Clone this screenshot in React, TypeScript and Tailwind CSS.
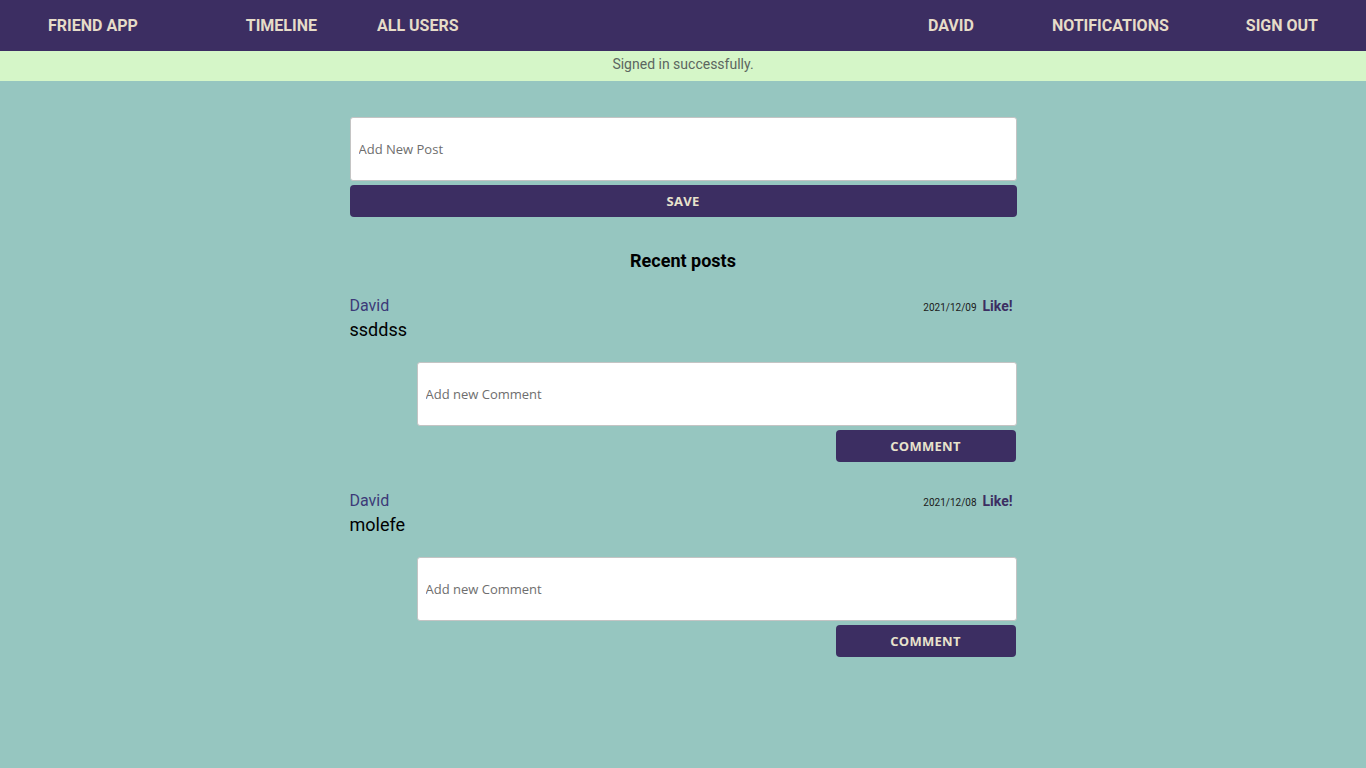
import React from "react";

const posts = [
  { author: "David", body: "ssddss", date: "2021/12/09" },
  { author: "David", body: "molefe", date: "2021/12/08" },
];

export default function App() {
  return (
    <div className="min-h-screen bg-[#96c6c0]" style={{ fontFamily: "Roboto, 'Noto Sans', sans-serif" }}>
      <nav className="h-[51px] bg-[#3c2e62] flex items-center pt-[1px] text-[#e6dcc8] font-bold text-[16px] pl-[48px] pr-[48px]">
        <a className="">FRIEND APP</a>
        <a className="ml-[108px]">TIMELINE</a>
        <a className="ml-[60px]">ALL USERS</a>
        <a className="ml-auto">DAVID</a>
        <a className="ml-[78px]">NOTIFICATIONS</a>
        <a className="ml-[77px]">SIGN OUT</a>
      </nav>
      <div className="h-[30px] bg-[#d5f6c8] flex items-center justify-center pb-[4px] text-[14px] text-[#5c6660]">
        Signed in successfully.
      </div>
      <main className="w-[667px] mx-auto pt-[36px] pb-10">
        <input
          placeholder="Add New Post"
          className="block w-full h-[64px] bg-white border border-[#c4c4c4] rounded-[3px] px-[8px] text-[13px] text-[#333] placeholder:text-[#6e6e6e] outline-none"
          style={{ fontFamily: "'Open Sans', 'Noto Sans', sans-serif" }}
        />
        <button
          className="mt-[4px] block w-full h-[32px] pt-[2px] bg-[#3c2e62] rounded-[4px] text-[#e8e2cc] font-bold text-[13px] tracking-[0.3px]"
          style={{ fontFamily: "'Open Sans', 'Noto Sans', sans-serif" }}
        >
          SAVE
        </button>
        <h2 className="mt-[32px] text-center text-[18px] font-bold leading-[24px] text-black">Recent posts</h2>
        <div className="mt-[21px] flex flex-col gap-[27px]">
          {posts.map((p, i) => (
            <div key={i}>
              <div className="flex items-center justify-between h-[24px]">
                <span className="text-[16px] text-[#3c3a78]">{p.author}</span>
                <span className="flex items-center gap-[6px] pr-[4px]">
                  <span className="text-[10px] text-[#1a1a1a] mt-[2px]">{p.date}</span>
                  <span className="text-[14px] font-bold text-[#3c2e62]">Like!</span>
                </span>
              </div>
              <p className="text-[18px] leading-[24px] text-black">{p.body}</p>
              <div className="mt-[20px] ml-[67px]">
                <input
                  placeholder="Add new Comment"
                  className="block w-full h-[64px] bg-white border border-[#c4c4c4] rounded-[3px] px-[8px] text-[13px] text-[#333] placeholder:text-[#6e6e6e] outline-none"
                  style={{ fontFamily: "'Open Sans', 'Noto Sans', sans-serif" }}
                />
                <div className="flex justify-end pr-[1px]">
                  <button
                    className="mt-[4px] w-[180px] h-[32px] pt-[2px] bg-[#3c2e62] rounded-[4px] text-[#e8e2cc] font-bold text-[13px] tracking-[0.3px]"
                    style={{ fontFamily: "'Open Sans', 'Noto Sans', sans-serif" }}
                  >
                    COMMENT
                  </button>
                </div>
              </div>
            </div>
          ))}
        </div>
      </main>
    </div>
  );
}
